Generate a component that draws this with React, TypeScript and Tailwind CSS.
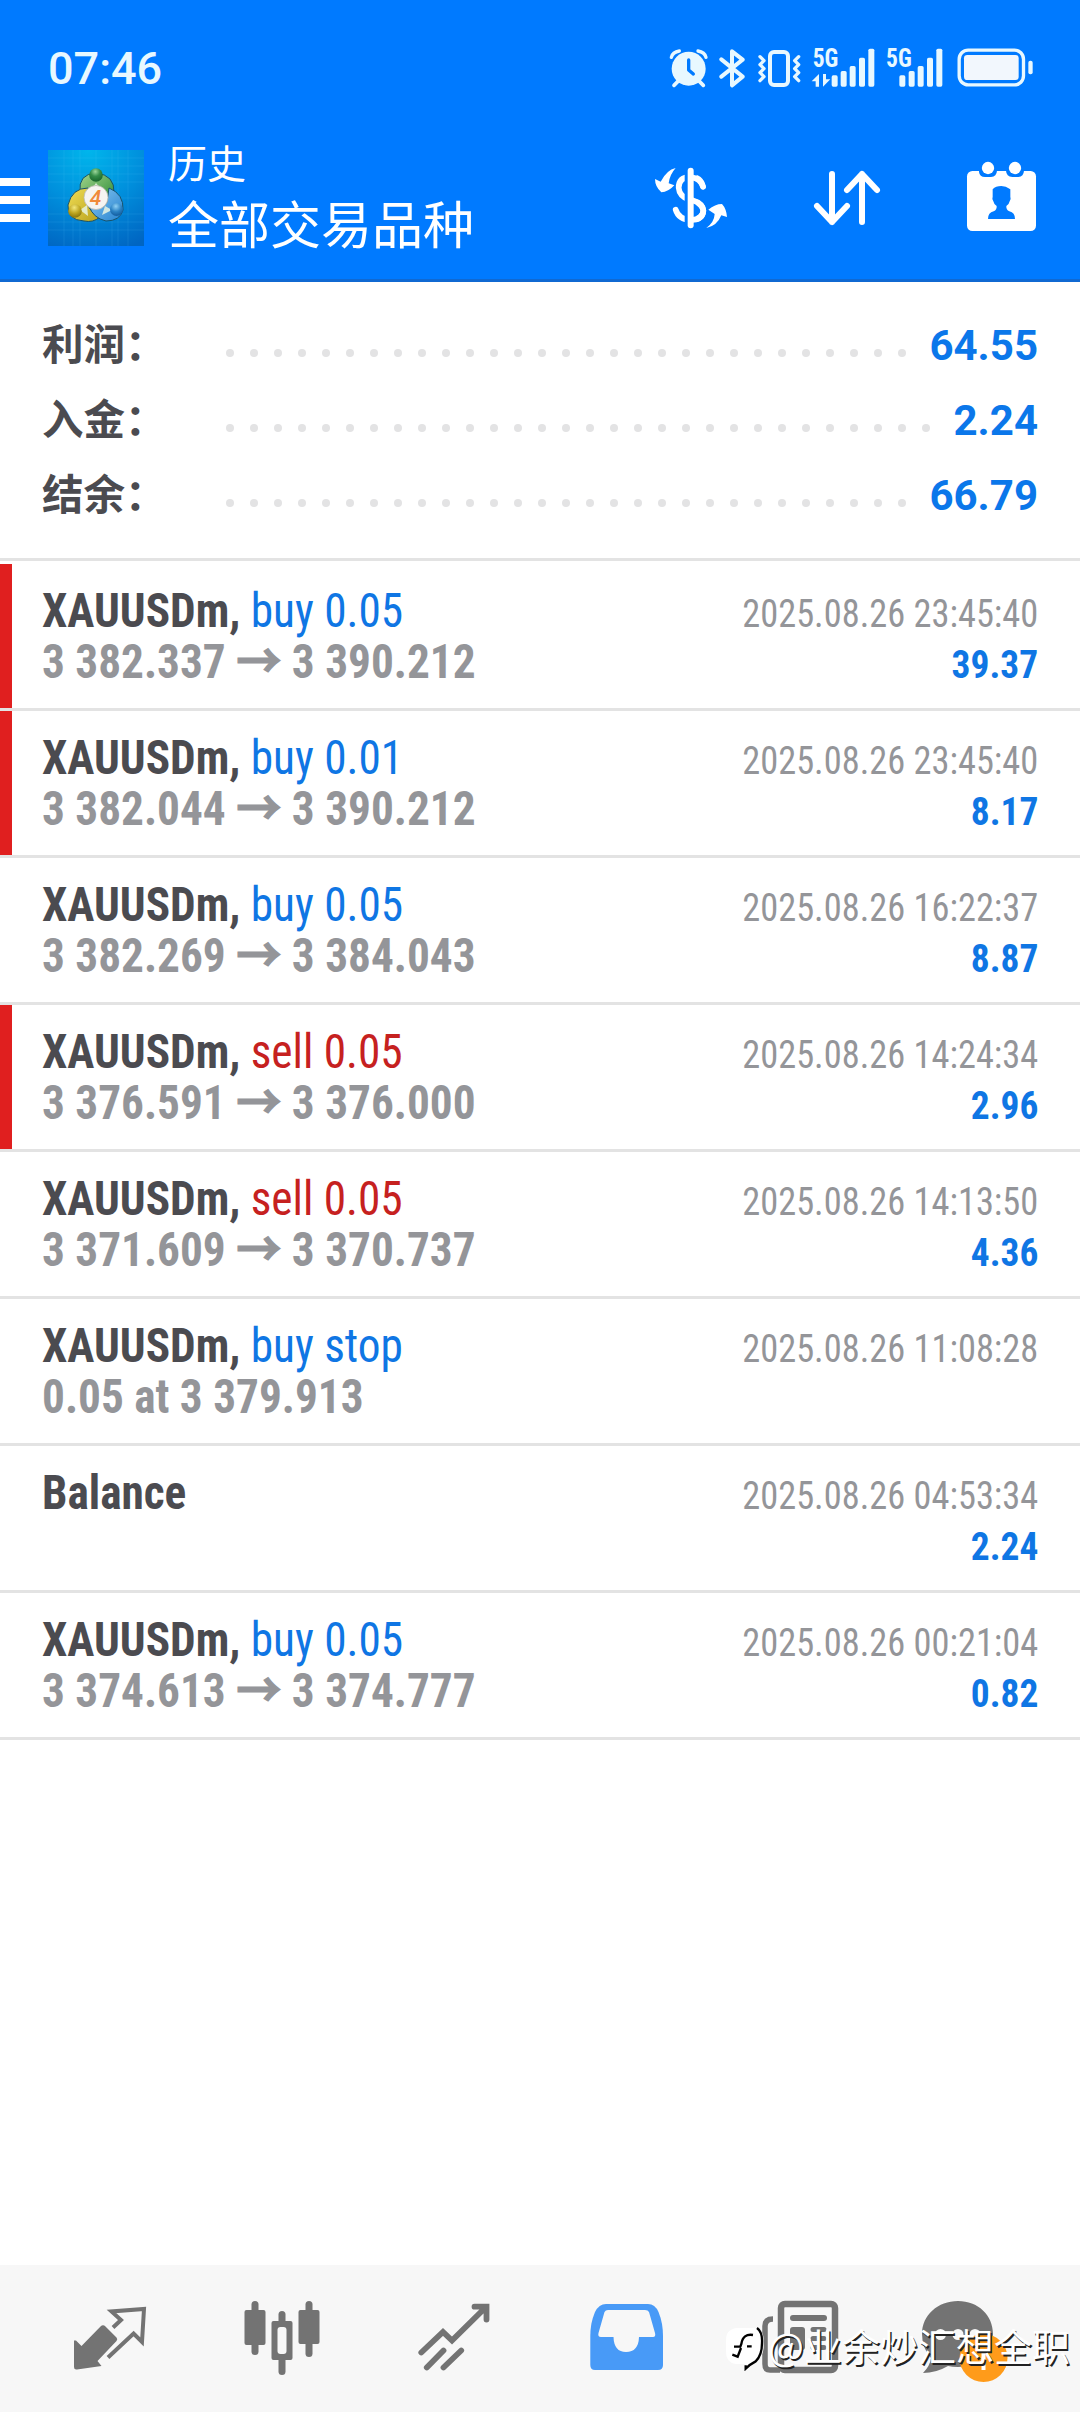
import type { ReactNode } from "react";

type Deal = {
  symbol: string;
  side?: string;
  tone?: "buy" | "sell";
  from?: string;
  to?: string;
  detail?: string;
  time: string;
  profit?: string;
  marked?: boolean;
};

const summary = [
  { label: "利润：", value: "64.55", dots: 29 },
  { label: "入金：", value: "2.24", dots: 30 },
  { label: "结余：", value: "66.79", dots: 29 },
];

const deals: Deal[] = [
  { symbol: "XAUUSDm,", side: "buy 0.05", tone: "buy", from: "3 382.337", to: "3 390.212", time: "2025.08.26 23:45:40", profit: "39.37", marked: true },
  { symbol: "XAUUSDm,", side: "buy 0.01", tone: "buy", from: "3 382.044", to: "3 390.212", time: "2025.08.26 23:45:40", profit: "8.17", marked: true },
  { symbol: "XAUUSDm,", side: "buy 0.05", tone: "buy", from: "3 382.269", to: "3 384.043", time: "2025.08.26 16:22:37", profit: "8.87" },
  { symbol: "XAUUSDm,", side: "sell 0.05", tone: "sell", from: "3 376.591", to: "3 376.000", time: "2025.08.26 14:24:34", profit: "2.96", marked: true },
  { symbol: "XAUUSDm,", side: "sell 0.05", tone: "sell", from: "3 371.609", to: "3 370.737", time: "2025.08.26 14:13:50", profit: "4.36" },
  { symbol: "XAUUSDm,", side: "buy stop", tone: "buy", detail: "0.05 at 3 379.913", time: "2025.08.26 11:08:28" },
  { symbol: "Balance", time: "2025.08.26 04:53:34", profit: "2.24" },
  { symbol: "XAUUSDm,", side: "buy 0.05", tone: "buy", from: "3 374.613", to: "3 374.777", time: "2025.08.26 00:21:04", profit: "0.82" },
];

function StatusBar() {
  return (
    <div className="flex h-[100px] items-start justify-between pl-[48px] pr-[46px] pt-[48px] text-[#e8f8ff]">
      <span className="mt-[-6px] font-['Roboto'] text-[45px] font-medium leading-[53px]">07:46</span>
      <div className="flex items-start">
        {/* alarm, bluetooth, vibrate */}
        <svg className="h-10 w-[132px]" viewBox="87 84 396 120" fill="none" stroke="currentColor">
          <circle cx="146" cy="146" r="51" fill="currentColor" stroke="none" />
          <path d="M94 112Q98 96 118 93M198 112Q194 96 174 93" strokeWidth="10" strokeLinecap="round" />
          <path d="M116 182L102 196M176 182L190 196" strokeWidth="11" strokeLinecap="round" />
          <path d="M146 120V150L160 162" stroke="#007aff" strokeWidth="10" strokeLinecap="round" strokeLinejoin="round" />
          <path d="M244 118L308 170L276 196V94L308 119L244 170" strokeWidth="12" strokeLinejoin="round" strokeLinecap="round" />
          <rect x="390" y="96" width="54" height="99" rx="12" strokeWidth="12" />
          <path d="M360 110L372 122L360 134L372 146L360 158L372 170L360 182M476 110L464 122L476 134L464 146L476 158L464 170L476 182" strokeWidth="10" strokeLinejoin="round" strokeLinecap="round" />
        </svg>
        {/* mobile signals */}
        <svg className="ml-[9px] h-10 w-[138px] overflow-visible" viewBox="510 84 414 120" fill="currentColor">
          <text x="518" y="141" fontSize="75" fontWeight="700" textLength="77" lengthAdjust="spacingAndGlyphs" fontFamily="Roboto Condensed">5G</text>
          <text x="738" y="141" fontSize="75" fontWeight="700" textLength="77" lengthAdjust="spacingAndGlyphs" fontFamily="Roboto Condensed">5G</text>
          <path d="M515 184L537 162V200H527V184ZM549 162H558V178H571L549 200Z" />
          <rect x="575" y="166" width="18" height="34" rx="5" />
          <rect x="602" y="153" width="18" height="47" rx="5" />
          <rect x="629" y="138" width="18" height="62" rx="5" />
          <rect x="657" y="113" width="18" height="87" rx="5" />
          <rect x="685" y="86" width="18" height="114" rx="5" />
          <rect x="778" y="166" width="18" height="34" rx="5" />
          <rect x="806" y="153" width="18" height="47" rx="5" />
          <rect x="833" y="138" width="18" height="62" rx="5" />
          <rect x="861" y="113" width="18" height="87" rx="5" />
          <rect x="889" y="86" width="18" height="114" rx="5" />
        </svg>
        {/* battery */}
        <svg className="ml-[8px] h-10 w-[78px]" viewBox="948 84 234 120" fill="none">
          <rect x="957.500" y="90.500" width="193" height="104" rx="27" stroke="currentColor" strokeWidth="10" />
          <rect x="972" y="105" width="164" height="75" rx="10" fill="#f2f7fd" />
          <rect x="1165" y="122" width="13" height="41" rx="6" fill="currentColor" />
        </svg>
      </div>
    </div>
  );
}

function AppLogo() {
  return (
    <svg className="h-24 w-24 shrink-0" viewBox="0 0 96 96">
      <defs>
        <radialGradient id="tile" cx="0.42" cy="0" r="1.1">
          <stop offset="0" stopColor="#00b6ec" />
          <stop offset="0.5" stopColor="#0090dd" />
          <stop offset="1" stopColor="#0065c2" />
        </radialGradient>
        <linearGradient id="green" x1="0" y1="0" x2="1" y2="1">
          <stop offset="0" stopColor="#a5d58c" />
          <stop offset="1" stopColor="#288a35" />
        </linearGradient>
        <linearGradient id="yellow" x1="0" y1="0" x2="1" y2="1">
          <stop offset="0" stopColor="#f0dd55" />
          <stop offset="1" stopColor="#b8a11c" />
        </linearGradient>
        <linearGradient id="blue" x1="0" y1="0" x2="1" y2="1">
          <stop offset="0" stopColor="#8bc9f2" />
          <stop offset="1" stopColor="#2482cf" />
        </linearGradient>
        <radialGradient id="greenBall" cx="0.45" cy="0.25" r="0.7">
          <stop offset="0" stopColor="#9dd79a" />
          <stop offset="0.5" stopColor="#358d48" />
          <stop offset="1" stopColor="#1c6a2e" />
        </radialGradient>
        <radialGradient id="yellowBall" cx="0.45" cy="0.25" r="0.7">
          <stop offset="0" stopColor="#f3e77a" />
          <stop offset="0.6" stopColor="#bda520" />
          <stop offset="1" stopColor="#8f7b10" />
        </radialGradient>
        <radialGradient id="blueBall" cx="0.45" cy="0.25" r="0.7">
          <stop offset="0" stopColor="#8fd0f5" />
          <stop offset="0.6" stopColor="#2a82c4" />
          <stop offset="1" stopColor="#1661a3" />
        </radialGradient>
      </defs>
      <rect width="96" height="96" fill="url(#tile)" />
      <path
        d="M0 8H96M0 16H96M0 24H96M0 32H96M0 48H96M0 64H96M0 72H96M0 80H96M16 0V96M25 0V96M32 0V96M48 0V96M64 0V96M70 0V96M80 0V96"
        stroke="#5ed0ff"
        strokeOpacity="0.13"
        strokeWidth="1"
      />
      {/* three linked rings */}
      <g stroke="#17526b" strokeWidth="1">
        <path d="M32 42Q30 24 48 23Q67 25 66 43Q65 50 58 53L38 42Q35 40 32 42Z" fill="url(#green)" />
        <path d="M40 38Q24 38 20 55Q19 70 36 71Q45 73 52 67Q41 62 38 50Z" fill="url(#yellow)" />
        <path d="M61 38Q76 44 75 60Q72 71 58 71Q45 68 41 56Q54 62 59 52Z" fill="url(#blue)" />
      </g>
      <path d="M48 33L43 40H54ZM32 60L39 55L40 66ZM64 60L57 56L54 65Z" fill="#e8f3e3" fillOpacity="0.85" />
      <circle cx="48" cy="25" r="6.800" fill="url(#greenBall)" />
      <circle cx="27" cy="61" r="6.800" fill="url(#yellowBall)" />
      <circle cx="68.500" cy="59.500" r="6.500" fill="url(#blueBall)" />
      <circle cx="48" cy="47.500" r="12" fill="#f6f4f1" stroke="#b9b9b0" strokeWidth="0.800" />
      <text x="47.500" y="55" textAnchor="middle" fontSize="21" fontWeight="500" fontStyle="italic" fontFamily="Roboto" fill="#f08a3a">4</text>
    </svg>
  );
}

function Header() {
  return (
    <header className="h-[282px] border-b-[3px] border-[#1069d2] bg-[#007aff] text-white">
      <StatusBar />
      <div className="flex h-[179px] items-start">
        <div className="mt-[78px] flex w-[30px] shrink-0 flex-col gap-[10px]">
          <span className="h-2 bg-white" />
          <span className="h-2 bg-white" />
          <span className="h-2 bg-white" />
        </div>
        <div className="ml-[18px] mt-[50px]">
          <AppLogo />
        </div>
        <div className="ml-6 mt-[40px] flex w-[485px] flex-col font-['Roboto','Noto_Sans_CJK_SC',sans-serif]">
          <span className="text-[39px] leading-[50px]">历史</span>
          <span className="mt-[7px] text-[51px] leading-[60px]">全部交易品种</span>
        </div>
        {/* dollar refresh */}
        <svg className="mt-[64px] h-[68px] w-[78px] shrink-0" viewBox="96 72 234 204" fill="none">
          <path d="M164 84Q137 90 119 125L102 117Q102 140 121 157Q142 156 160 136L143 130Q146 104 164 84Z" fill="white" />
          <path d="M256 264Q280 246 281 222L262 209Q282 192 303 192Q316 206 318 231L301 226Q288 258 256 264Z" fill="white" />
          <path d="M246 140Q239 111 209 110Q173 112 173 143Q175 170 207 180Q246 190 247 212Q245 238 210 240Q173 239 164 209" stroke="white" strokeWidth="17" strokeLinecap="round" />
          <path d="M209 92V256" stroke="#007aff" strokeWidth="36" />
          <path d="M212 112Q239 116 246 140M212 180Q246 190 247 212Q245 238 212 240" stroke="white" strokeWidth="17" strokeLinecap="round" />
          <path d="M209 92V256" stroke="white" strokeWidth="18" strokeLinecap="round" />
        </svg>
        {/* sort arrows */}
        <svg className="ml-[80px] mt-[68px] h-[60px] w-[72px] shrink-0" viewBox="570 84 216 180" fill="none" stroke="white" strokeWidth="18" strokeLinecap="round" strokeLinejoin="round">
          <path d="M633 102V246M588 198L633 246L678 198M723 246V102M678 150L723 102L768 150" />
        </svg>
        {/* calendar with person */}
        <svg className="ml-[83px] mt-[60px] h-[72px] w-[72px] shrink-0" viewBox="1035 60 216 216">
          <rect x="1038" y="93" width="207" height="180" rx="16" fill="white" />
          <path d="M1074 84V96Q1076 111 1092 111H1110Q1127 109 1128 92V84ZM1155 84V92Q1156 109 1174 111H1192Q1208 109 1209 92V84Z" fill="#007aff" />
          <circle cx="1101" cy="84" r="18.500" fill="white" />
          <circle cx="1182" cy="84" r="18.500" fill="white" />
          <path d="M1141 138Q1154 138 1168 148V170Q1171 178 1166 184Q1164 194 1156 198Q1155 210 1165 214Q1182 218 1182 237H1101Q1101 218 1118 214Q1128 210 1127 198Q1119 194 1117 184Q1112 178 1115 170V148Q1124 138 1141 138Z" fill="#007aff" />
        </svg>
      </div>
    </header>
  );
}

function Summary() {
  return (
    <section className="h-[279px] border-b-[3px] border-[#e3e3e3] px-[42px] pt-[26px]">
      {summary.map((row) => (
        <div key={row.label} className="flex h-[75px] items-center">
          <span className="w-[184px] shrink-0 font-['Roboto','Noto_Sans_CJK_SC',sans-serif] text-[41.500px] font-bold leading-[60px] text-[#4b4b50]">
            {row.label}
          </span>
          <div className="mt-[15px] flex gap-4">
            {Array.from({ length: row.dots }, (_, i) => (
              <span key={i} className="h-2 w-2 rounded-full bg-[#e3e3e4]" />
            ))}
          </div>
          <span className="ml-auto font-['Roboto'] text-[42px] font-bold leading-[60px] text-[#0b77ea]">{row.value}</span>
        </div>
      ))}
    </section>
  );
}

function DealRow({ deal }: { deal: Deal }) {
  return (
    <li className="flex h-[147px] justify-between border-b-[3px] border-[#e3e3e3] pr-[42px] font-['Roboto_Condensed','Noto_Sans_CJK_SC',sans-serif]">
      <span className={deal.marked ? "h-full w-3 shrink-0 bg-[#e01f1f]" : "w-3 shrink-0"} />
      <div className="ml-[30px] flex flex-1 origin-left scale-x-[0.943] flex-col whitespace-nowrap pt-[21px] text-[48px] leading-[51px]">
        <div className="h-[51px]">
          <span className="font-bold text-[#4b4b50]">{deal.symbol}</span>
          {deal.side && <span className={deal.tone === "sell" ? "text-[#c6211f]" : "text-[#0f76e4]"}> {deal.side}</span>}
        </div>
        {deal.from && (
          <div className="h-[51px] font-bold text-[#949599]">
            {deal.from} <span className="[-webkit-text-stroke:1.200px_#949599]">→</span> {deal.to}
          </div>
        )}
        {deal.detail && <div className="h-[51px] font-bold text-[#949599]">{deal.detail}</div>}
      </div>
      <div className="flex flex-col items-end whitespace-nowrap pt-[25px] text-[39px] leading-[51px]">
        <span className="origin-right scale-x-[0.933] text-[#949599]">{deal.time}</span>
        {deal.profit && <span className="origin-right scale-x-[0.96] font-bold text-[#0f76e4]">{deal.profit}</span>}
      </div>
    </li>
  );
}

function NavItem({ children }: { children: ReactNode }) {
  return (
    <div className="flex w-[172px] justify-center text-[#737373]">
      <svg className="h-24 w-24" viewBox="0 0 96 96" fill="none" stroke="currentColor">
        {children}
      </svg>
    </div>
  );
}

function BottomNav() {
  return (
    <nav className="mt-auto flex h-[147px] bg-[#f7f7f7] px-6 pt-[25px]">
      <NavItem>
        <path d="M51 37.500L59 30L49.500 21.500L82 19L80 52L71.600 43.500L46 67.500" strokeWidth="4" />
        <path d="M38.500 36.500Q41 34 43.500 36.500L54.500 47.500Q56 49 54.500 51L35.500 71L39.500 76L15 79.500Q12 80 12 77V50.500H14L19.500 56Z" fill="currentColor" stroke="none" />
      </NavItem>
      <NavItem>
        <g fill="currentColor" stroke="none">
          <rect x="17.500" y="11" width="7" height="54" rx="3.500" />
          <rect x="10.500" y="20" width="21" height="35" rx="2" />
          <rect x="71.500" y="11" width="7" height="56" rx="3.500" />
          <rect x="64.500" y="20" width="21" height="34" rx="2" />
          <rect x="44.500" y="21" width="7" height="64" rx="3.500" />
          <rect x="37.500" y="31" width="21" height="39" rx="2" />
        </g>
        <rect x="43.500" y="37" width="9" height="27" rx="3" fill="#f7f7f7" stroke="none" />
      </NavItem>
      <NavItem>
        <path d="M15.300 62.500L37 42L46 50.500L79 18M68.500 16.700H80.500V29.500M20.800 77.500L37.500 60.500M37.500 77.500L55.200 60.500" strokeWidth="5.800" strokeLinecap="round" />
      </NavItem>
      <NavItem>
        <path d="M28 14H70Q77 14 80.500 22Q85 33 85 46V75Q85 80 80 80H17Q12.300 80 12.300 75V46Q12.300 33 17 22Q21 14 28 14Z" fill="#489af7" stroke="none" />
        <path d="M30 20H67Q70 20 71 22L77 43Q78 47 75 47H61Q60.500 62 48 62Q36 62 35.500 47H23Q19.500 47 20.500 43L26.500 22Q27.500 20 30 20Z" fill="#f7f7f7" stroke="none" />
      </NavItem>
      <NavItem>
        <rect x="31" y="14" width="54" height="66" rx="4" strokeWidth="6.500" />
        <path d="M30 80H20Q15 80 15 74V36Q15 29 23 29" strokeWidth="5.500" />
        <path d="M43 28H74" strokeWidth="6" strokeLinecap="round" />
        <rect x="40" y="37" width="15" height="23" rx="3" fill="currentColor" stroke="none" />
        <path d="M63 39.500H74M63 48.500H74M63 57.500H74" strokeWidth="5" strokeLinecap="round" />
      </NavItem>
      <NavItem>
        <path d="M36 11C56 11 71 25 71 44C71 64 56 77 36 77Q30 77 26 76Q14 83 1 83Q8 76 9 68Q0 58 0 44C0 25 16 11 36 11Z" fill="currentColor" stroke="none" />
        <circle cx="18.500" cy="44.500" r="5.500" fill="#f7f7f7" stroke="none" />
        <circle cx="36" cy="44.500" r="5.500" fill="#f7f7f7" stroke="none" />
        <circle cx="53" cy="44.500" r="5.500" fill="#f7f7f7" stroke="none" />
        <circle cx="61.500" cy="68" r="24" fill="#ff9b1a" stroke="none" />
        <path d="M61.500 60V80" stroke="white" strokeWidth="4" />
      </NavItem>
    </nav>
  );
}

function Watermark() {
  return (
    <div className="absolute bottom-[41px] right-[10px] flex items-center">
      <svg className="mr-[3px] mt-[7px] h-[45px] w-[40px]" viewBox="28 124 120 135" fill="none">
        <path d="M66 130H116Q143 132 144 165V190Q140 222 116 236Q100 240 88 256V238H60Q30 234 31 200V165Q32 132 66 130Z" fill="white" />
        <path d="M124 130Q141 142 139 175Q139 212 120 230Q104 238 90 252V242" stroke="black" strokeWidth="7" />
        <path d="M112 151Q82 146 77 178L74 186H55M76 190L66 216L50 210M94 185H108" stroke="black" strokeWidth="7" />
      </svg>
      <span className="whitespace-nowrap font-['Noto_Sans_CJK_SC',sans-serif] text-[38px] font-normal leading-[50px] text-white [text-shadow:1.500px_1.500px_0_#222]">
        @业余炒汇想全职
      </span>
    </div>
  );
}

export default function App() {
  return (
    <main className="relative flex h-[2412px] w-[1080px] flex-col overflow-hidden bg-white">
      <Header />
      <Summary />
      <ul className="pt-[3px]">
        {deals.map((deal, i) => (
          <DealRow key={i} deal={deal} />
        ))}
      </ul>
      <BottomNav />
      <Watermark />
    </main>
  );
}
